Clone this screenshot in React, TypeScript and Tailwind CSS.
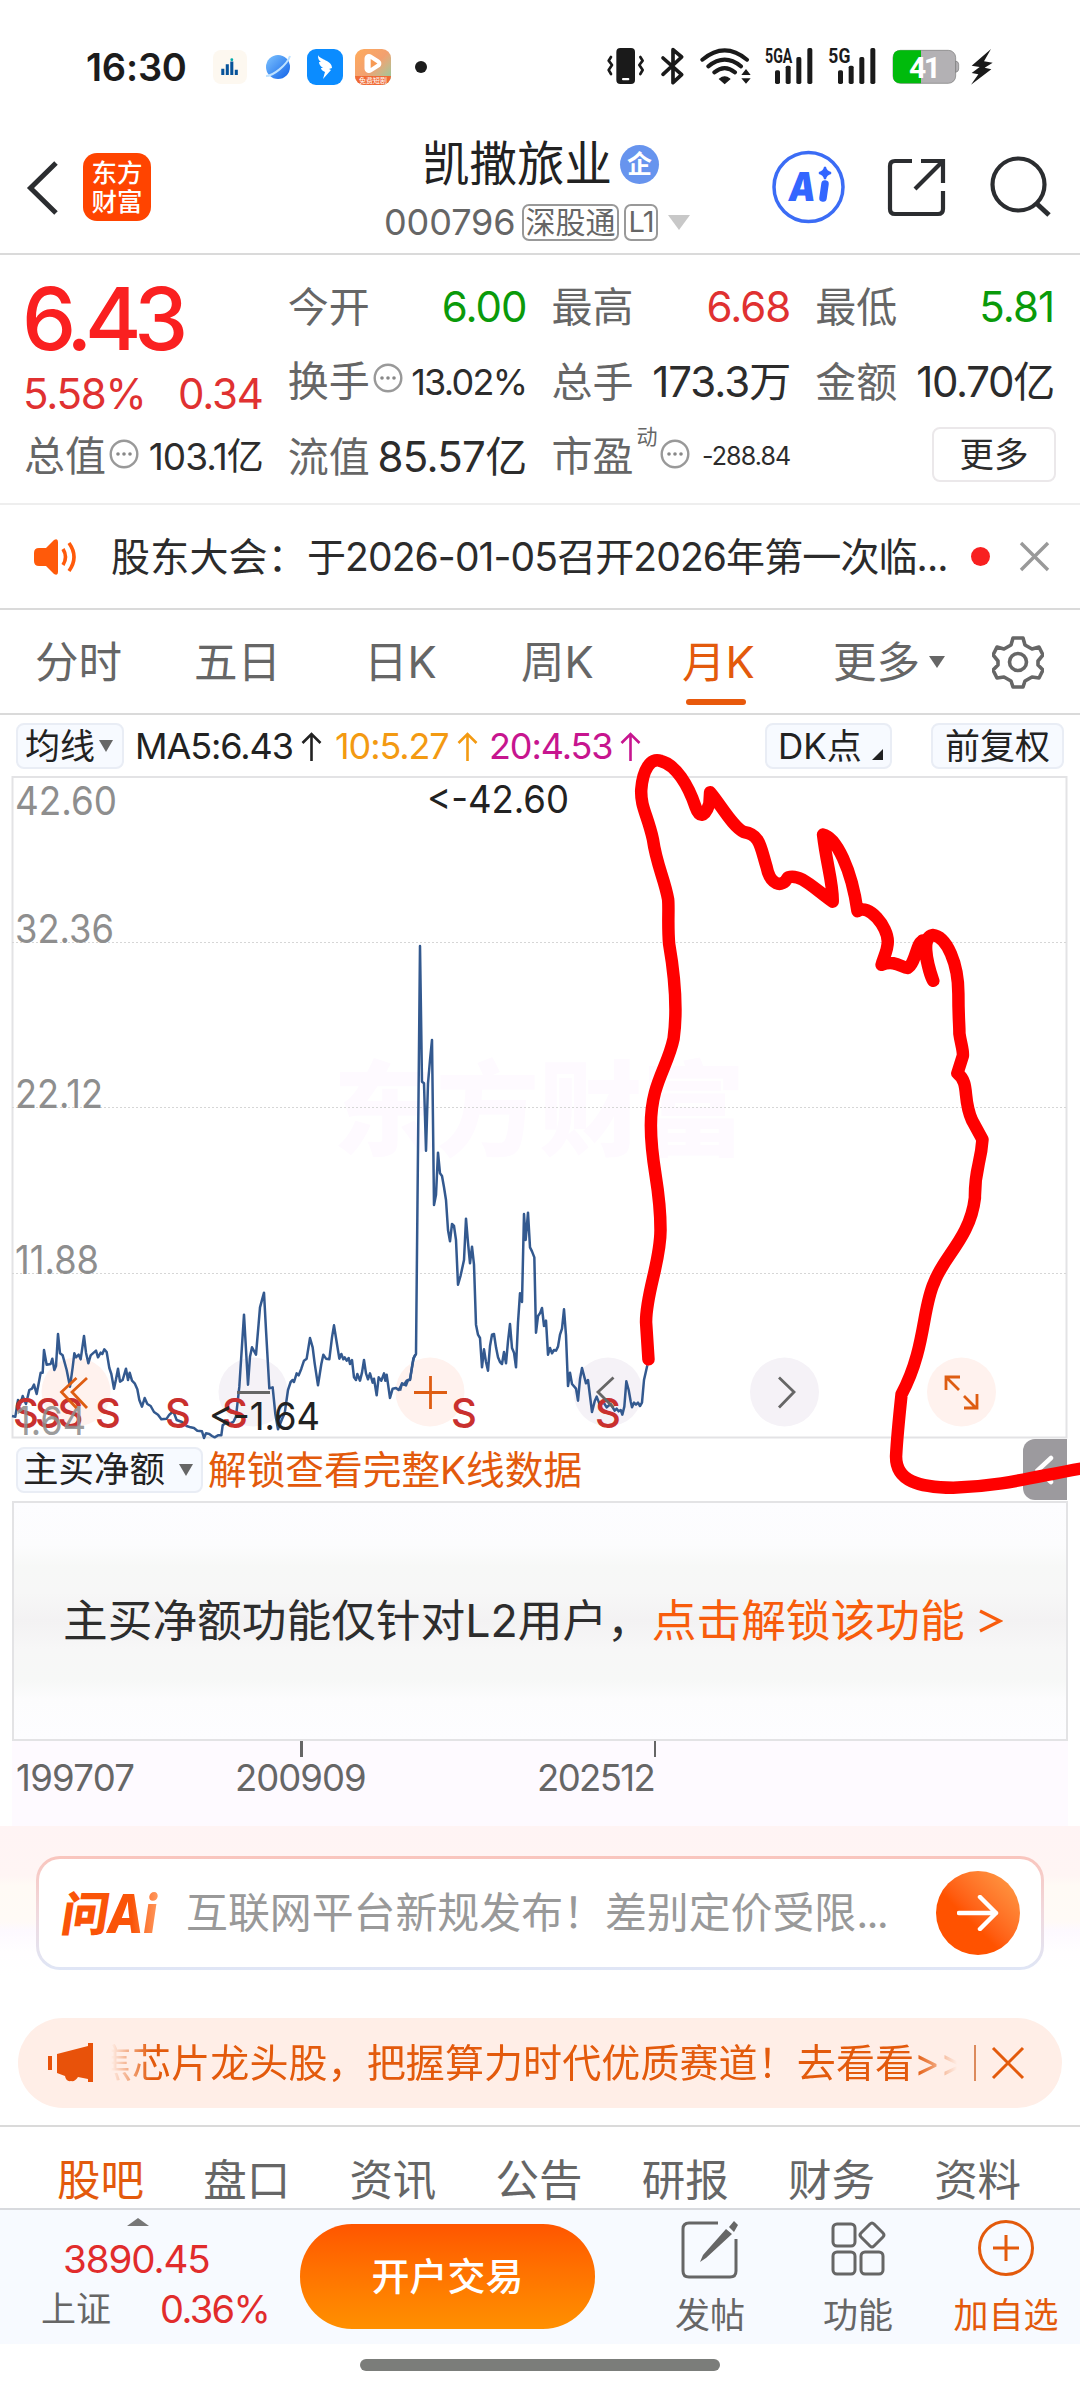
import type { ReactNode } from 'react';

const PRICE_EARLY =
  '36,378 46,380 54,330 60,345 68,318 78,342 88,300 96,296 102,284 110,312 122,248 128,248 132,180 140,224 152,222 157,206 163,240 168,228 174,132 180,190 188,196 200,240 210,290 218,232 223,190 228,202 236,194 242,208 252,138 258,188 265,220 272,196 288,182 294,202 302,188 307,192 313,178 320,186 328,234 334,252 342,296 348,268 354,236 360,275 368,270 378,236 384,270 389,248 396,272 404,280 412,298 418,330 426,350 434,324 442,342 452,348 462,366 474,374 484,388 500,386 508,374 520,364 530,390 546,396 560,408 572,412 582,414 592,422 606,424 612,444 618,430 628,432 636,438 644,442 654,436 664,436 668,406 676,400 686,402 700,396 708,380 718,290 732,74 744,284 750,200 756,172 768,194 776,100 780,52 792,8 798,120 808,295 818,292 826,372 834,418 846,388 854,370 864,300 872,276 878,270 882,276 890,250 896,256 904,236 912,212 920,206 930,144 938,172 944,220 954,286 964,222 970,194 978,206 988,208 996,142 1002,106 1008,144 1018,206 1024,192 1030,208 1034,202 1040,212 1046,204 1050,222 1056,210 1062,262 1068,270 1072,252 1080,272 1086,248 1092,210 1098,250 1104,268 1110,250 1118,278 1122,266 1130,316 1136,262 1144,272 1152,250 1156,272 1160,254 1170,324 1178,296 1188,294 1196,300 1206,282 1212,284 1220,272 1230,268 1240,206 1246,194';
const PRICE_LATE =
  '0,1352 6,1330 18,1336 24,1320 30,1320 38,1270 42,1252 48,1242 60,18 66,425 72,430 78,632 84,430 90,360 96,300 102,795 108,764 114,638 120,700 126,708 132,742 138,780 144,870 150,904 156,852 162,858 168,900 174,1034 182,1006 192,960 198,836 204,908 210,970 216,920 222,974 228,1154 234,1184 240,1194 246,1282 252,1228 258,1266 264,1292 270,1218 276,1184 282,1182 288,1222 294,1252 300,1266 306,1272 312,1236 318,1270 324,1204 330,1152 336,1224 342,1238 348,1282 354,1148 360,1060 366,1086 372,822 377,900 384,818 390,922 396,934 403,952 408,1178 414,1128 420,1120 426,1104 432,1158 438,1142 444,1244 450,1224 456,1240 462,1230 468,1232 474,1220 480,1184 486,1166 492,1108 498,1186 504,1338 510,1298 516,1332 528,1346 534,1382 540,1318 546,1284 558,1330 564,1320 570,1368 576,1416 584,1384 590,1370 600,1396 610,1386 620,1402 632,1392 644,1412 650,1406 656,1414 662,1410 667,1424 673,1400 679,1324 686,1350 692,1384 696,1402 702,1388 708,1394 714,1388 720,1398 726,1388 732,1320 742,1276';

const SCRIBBLE =
  'M315 1245 L308 1170 C308 1110 350 1050 350 985 C350 890 322 860 322 775 C322 690 370 660 388 600 C400 540 390 470 375 410 C370 370 375 340 372 320 C362 280 338 250 328 200 C312 150 292 135 294 100 C298 60 322 34 350 42 C395 50 430 90 452 135 C462 155 478 158 492 128 L494 105 C525 130 560 175 592 185 C640 190 640 215 658 255 C668 290 702 300 720 276 C755 268 790 295 850 325 C852 290 832 250 822 190 C860 195 905 260 922 344 C955 328 1010 375 1010 405 C1010 425 995 440 992 452 C1030 440 1055 460 1068 458 C1090 450 1095 405 1110 405 C1115 390 1120 460 1142 484 C1120 440 1110 396 1140 392 C1182 395 1215 450 1215 510 C1215 560 1218 570 1218 590 C1222 610 1230 625 1228 635 L1212 670 C1250 690 1225 720 1255 765 L1285 803 C1280 855 1262 860 1263 920 C1250 1000 1170 1040 1145 1090 C1110 1140 1120 1225 1050 1315 C1040 1380 1037 1400 1034 1440 C1034 1490 1100 1502 1200 1503 C1350 1500 1450 1478 1600 1461';

function Dots() {
  return (
    <svg className="size-[30px] shrink-0" viewBox="0 0 30 30">
      <circle cx="15" cy="15" r="13.3" fill="none" stroke="#999" strokeWidth="2.4" />
      <circle cx="9" cy="15" r="1.8" fill="#888" />
      <circle cx="15" cy="15" r="1.8" fill="#888" />
      <circle cx="21" cy="15" r="1.8" fill="#888" />
    </svg>
  );
}

function Label({ children }: { children: string }) {
  return <span className="-ml-[2px] text-[41px] text-[#666]">{children}</span>;
}

function Cell({ label, children }: { label: string; children: ReactNode }) {
  return (
    <div className="flex h-[75px] items-center justify-between text-[42px] leading-[48px]">
      <Label>{label}</Label>
      {children}
    </div>
  );
}

function StatusBar() {
  return (
    <div className="flex h-[134px] items-center pl-[86px]">
      <span className="w-[127px] text-[38px] font-semibold tracking-[-0.200px] text-[#1c1c1c]">16:30</span>
      <div className="flex size-[34px] items-center justify-center rounded-[8px] bg-[#fdf8f0]">
        <svg className="h-[18px] w-[18px]" viewBox="0 0 20 20">
          <path d="M2 19V12M7 19V7M12 19V4M17 19v-6" stroke="#07539a" strokeWidth="3.4" />
          <circle cx="12" cy="2" r="1.6" fill="#0aa" />
        </svg>
      </div>
      <svg className="ml-[16px] size-[30px]" viewBox="0 0 30 30">
        <defs>
          <linearGradient id="globe" x1="0" y1="0" x2="1" y2="1">
            <stop offset="0" stopColor="#7fc4ff" />
            <stop offset="1" stopColor="#1062e8" />
          </linearGradient>
        </defs>
        <circle cx="15" cy="15" r="12" fill="url(#globe)" />
        <path d="M3 24C10 24 24 13 27 4" fill="none" stroke="#bfe2ff" strokeWidth="2" />
      </svg>
      <div className="ml-[14px] flex size-[36px] items-center justify-center rounded-[9px] bg-[#0b8cff]">
        <svg className="size-[28px]" viewBox="0 0 28 28">
          <path d="M7 2c2 5 14 5 14 13l-3 1 2 1-8 9 2-7c-3-1-4-3-4-4h2c-3-2-4-4-4-6h2C7 7 7 4 7 2z" fill="#fff" />
        </svg>
      </div>
      <div className="relative ml-[12px] flex size-[36px] items-center justify-center overflow-hidden rounded-[9px] bg-linear-to-br from-[#ffab5a] via-[#f2a070] to-[#6fd0a8]">
        <svg className="mb-[7px] size-[27px]" viewBox="0 0 24 24">
          <path d="M8 7.500l7 4.500-7 4.500z" fill="none" stroke="#fff" strokeWidth="8" strokeLinejoin="round" />
          <path d="M9.500 8l6 4-6 4z" fill="#f79a54" />
        </svg>
        <span className="absolute inset-x-0 bottom-0 h-[9px] bg-[#f06a35] text-center text-[7px] leading-[9px] text-white">免费短剧</span>
      </div>
      <span className="ml-[24px] size-[12px] rounded-full bg-[#1c1c1c]" />
      <svg className="ml-[172px] h-[56px] w-[410px]" viewBox="0 0 1230 168">
        <g fill="#1a1a1a" stroke="none">
          <rect x="52" y="27" width="56" height="108" rx="12" />
          <rect x="69" y="117" width="22" height="7" rx="3" fill="#fff" />
          <path d="M362 120q15-13 30 0l-15 13z" stroke="#1a1a1a" strokeWidth="4" />
          <path d="M441 90l14 18h-28zM441 134l14-16h-28z" />
          <rect x="528" y="94" width="15" height="41" rx="5" />
          <rect x="560" y="80" width="15" height="55" rx="5" />
          <rect x="592" y="54" width="15" height="81" rx="5" />
          <rect x="625" y="27" width="15" height="108" rx="5" />
          <rect x="717" y="94" width="15" height="41" rx="5" />
          <rect x="749" y="80" width="15" height="55" rx="5" />
          <rect x="781" y="54" width="15" height="81" rx="5" />
          <rect x="814" y="27" width="15" height="108" rx="5" />
          <path d="M1176 30L1118 80l24 4-24 18 20 4-22 31 61-46-20-5 24-15-26-4z" />
        </g>
        <g fill="none" stroke="#1a1a1a" strokeWidth="8" strokeLinejoin="round" strokeLinecap="round">
          <path d="M36 54l-7 11 10 13-10 15 7 12M124 54l7 11-10 13 10 15-7 12" />
          <path d="M192 57l56 50-26 24V32l26 22-56 52" strokeWidth="11" />
          <path d="M310 62q67-56 134 0M328 82q49-40 98 0M346 100q31-25 62 0" strokeWidth="12" />
        </g>
        <g fontFamily="Roboto, sans-serif" fontWeight="700" fontSize="62" fill="#1a1a1a">
          <text x="498" y="71" textLength="82" lengthAdjust="spacingAndGlyphs">5GA</text>
          <text x="688" y="71" textLength="66" lengthAdjust="spacingAndGlyphs">5G</text>
        </g>
        <rect x="882" y="34" width="188" height="99" rx="22" fill="#b3b1b4" stroke="#777" strokeWidth="2" />
        <path d="M966 34h-62q-22 0-22 22v55q0 22 22 22h62z" fill="#00bb0c" />
        <path d="M1070 66q9 2 9 10v14q0 8-9 10z" fill="#b3b1b4" stroke="#777" strokeWidth="2" />
        <text x="930" y="116" fontFamily="Roboto, sans-serif" fontWeight="700" fontSize="90" fill="#fff" textLength="96">41</text>
      </svg>
    </div>
  );
}

function Header() {
  return (
    <div className="flex h-[121px] border-b-2 border-[#dadada] pl-[26px]">
      <svg className="mt-[26px] h-[56px] w-[34px]" viewBox="0 0 34 56">
        <path d="M30 3L4.500 28 30 53" fill="none" stroke="#2b2d30" strokeWidth="5" />
      </svg>
      <div className="mt-[19px] ml-[23px] flex size-[68px] flex-col items-center justify-center rounded-[14px] bg-[#ff4400] text-[25.5px] leading-[29px] font-medium text-white">
        <span>东方</span>
        <span>财富</span>
      </div>
      <div className="ml-[233px] w-[310px]">
        <div className="flex h-[60px] items-center pl-[38px]">
          <span className="text-[47.500px] leading-[56px] text-[#222]">凯撒旅业</span>
          <span className="ml-[8px] flex size-[39px] items-center justify-center rounded-full bg-[#6794ee] text-[25px] leading-[30px] font-bold text-white">企</span>
        </div>
        <div className="mt-[9px] flex h-[38px] items-center text-[#666]">
          <span className="w-[138px] text-[36px] leading-[36px] tracking-[-0.100px]">000796</span>
          <span className="flex h-[37px] w-[97px] items-center justify-center rounded-[7px] border-2 border-[#999] text-[30px] leading-[34px]">深股通</span>
          <span className="ml-[5px] flex h-[37px] w-[34px] items-center justify-center rounded-[7px] border-2 border-[#999] text-[29px] leading-[34px] tracking-[-1px]">L1</span>
          <span className="ml-[10px] size-0 border-x-[11px] border-t-[15px] border-x-transparent border-t-[#c8c8c8]" />
        </div>
      </div>
      <svg className="mt-[14px] ml-[68px] h-[80px] w-[290px] shrink-0" viewBox="762 148 290 80">
        <circle cx="808.500" cy="187" r="34.500" fill="none" stroke="#3b6cf5" strokeWidth="3.500" />
        <text x="787" y="201" transform="translate(25 0) skewX(-7)" fontFamily="Inter, sans-serif" fontWeight="900" fontSize="40" fill="#3366ff" textLength="27" lengthAdjust="spacingAndGlyphs">A</text>
        <path d="M825 184l-2 14" stroke="#3366ff" strokeWidth="7.500" strokeLinecap="round" />
        <path d="M825 167q1 5 6 6-5 1-6 6-1-5-6-6 5-1 6-6z" fill="#3366ff" stroke="#3366ff" strokeWidth="2" />
        <g fill="none" stroke="#2b2d30" strokeWidth="4.200">
          <path d="M912 161h-17q-5 0-5 5v43q0 5 5 5h43q5 0 5-5v-18" />
          <path d="M921 161h22v22M943 161l-28 28" />
          <circle cx="1018.500" cy="184.500" r="26" />
          <path d="M1036 203l13 12" strokeWidth="5" />
        </g>
      </svg>
    </div>
  );
}

function Quote() {
  return (
    <div className="grid h-[250px] grid-cols-4 gap-[27px] border-b-2 border-[#eee] px-[26px] pt-[14px] text-[#2c2c2c]">
      <div>
        <div className="-ml-[4px] flex h-[100px] items-center text-[86px] leading-[90px] font-medium tracking-[-7.200px] text-[#fa2020]">6.43</div>
        <div className="-ml-[3px] flex h-[50px] items-center justify-between text-[42px] leading-[50px] tracking-[-1.200px] text-[#e03131]">
          <span>5.58%</span>
          <span>0.34</span>
        </div>
        <div className="flex h-[75px] items-center">
          <Label>总值</Label>
          <span className="mb-[6px] ml-[3px] flex"><Dots /></span>
          <span className="ml-auto text-[37px] tracking-[-1px]">103.1亿</span>
        </div>
      </div>
      <div>
        <Cell label="今开"><span className="tracking-[-1px] text-[#0a9a0a]">6.00</span></Cell>
        <div className="flex h-[75px] items-center">
          <Label>换手</Label>
          <span className="mb-[8px] ml-[3px] flex"><Dots /></span>
          <span className="ml-auto text-[36px] tracking-[-1.700px]">13.02%</span>
        </div>
        <Cell label="流值"><span className="tracking-[-0.700px]">85.57亿</span></Cell>
      </div>
      <div>
        <Cell label="最高"><span className="tracking-[-1px] text-[#e03131]">6.68</span></Cell>
        <Cell label="总手"><span className="tracking-[-1px]">173.3万</span></Cell>
        <div className="flex h-[75px] items-center">
          <Label>市盈</Label>
          <span className="mb-[40px] ml-[3px] text-[21px] leading-[24px] text-[#666]">动</span>
          <span className="mb-[6px] ml-[2px] flex"><Dots /></span>
          <span className="ml-auto text-[25px] tracking-[-0.900px]">-288.84</span>
        </div>
      </div>
      <div>
        <Cell label="最低"><span className="tracking-[-1px] text-[#0a9a0a]">5.81</span></Cell>
        <Cell label="金额"><span className="tracking-[-1.300px]">10.70亿</span></Cell>
        <div className="mt-[8px] -mr-[2px] ml-auto flex h-[55px] w-[124px] items-center justify-center rounded-[8px] border-2 border-[#ebe8ea] text-[34.500px] leading-[40px]">更多</div>
      </div>
    </div>
  );
}

function Notice() {
  return (
    <div className="flex h-[105px] items-center border-b-2 border-[#dadada] pl-[33px]">
      <svg className="h-[38px] w-[46px]" viewBox="0 0 46 38">
        <path d="M6 10h7L21 2q4-2 4 2v30q0 4-4 2l-8-8H6q-5 0-5-5v-8q0-5 5-5z" fill="#ff5a0a" />
        <path d="M30 11q5 8 0 16M36 5q10 14 0 28" fill="none" stroke="#ff5a0a" strokeWidth="3.600" />
      </svg>
      <span className="ml-[32px] w-[860px] text-[39px] leading-[48px] tracking-[-0.900px] whitespace-nowrap text-[#2b2b2b]">
        <span className="tracking-[0.200px]">股东大会：</span>于2026-01-05召开2026年第一次临...
      </span>
      <span className="size-[19px] rounded-full bg-[#f82020]" />
      <svg className="ml-[29px] size-[31px]" viewBox="0 0 31 31">
        <path d="M2 2l27 27M29 2L2 29" stroke="#999" strokeWidth="3.400" />
      </svg>
    </div>
  );
}

const PERIODS = [
  { label: '分时', pad: 'ml-[35px] w-[88px]' },
  { label: '五日', pad: 'ml-[71px] w-[88px]' },
  { label: '日K', pad: 'ml-[82px] w-[76px]' },
  { label: '周K', pad: 'ml-[81px] w-[76px]' },
  { label: '月K', pad: 'ml-[85px] w-[72px]', active: true },
  { label: '更多', pad: 'ml-[79px] w-[88px]' },
];

function Periods() {
  return (
    <div className="flex h-[105px] items-center border-b-2 border-[#dadada] text-[43.500px] leading-[52px] text-[#666]">
      {PERIODS.map((p) => (
        <span key={p.label} className={`relative shrink-0 whitespace-nowrap ${p.pad} ${p.active ? 'text-[#e35a0c]' : ''}`}>
          {p.label}
          {p.active && <span className="absolute -bottom-[17px] left-[4px] h-[6px] w-[60px] rounded-full bg-[#e8590c]" />}
        </span>
      ))}
      <span className="ml-[8px] size-0 border-x-[8px] border-t-[12px] border-x-transparent border-t-[#666]" />
      <svg className="ml-[47px] h-[54px] w-[52px]" viewBox="0 0 52 54">
        <path
          d="M21 3h10l2 7 7 4 7-2 4 8-5 6v4l5 5-4 8-7-1-7 4-2 6H21l-2-6-7-4-7 1-4-8 5-5v-4l-5-6 4-8 7 2 7-4z"
          fill="none" stroke="#666" strokeWidth="3.600" strokeLinejoin="round"
        />
        <circle cx="26" cy="27" r="8.500" fill="none" stroke="#666" strokeWidth="3.600" />
      </svg>
    </div>
  );
}

function Averages() {
  return (
    <div className="flex h-[61px] items-center pl-[16px] text-[36px] leading-[44px] whitespace-nowrap text-[#222]">
      <span className="flex h-[46px] w-[108px] items-center rounded-[8px] border-2 border-[#e9edf5] bg-[#f7faff] pl-[7px]">
        <span className="text-[35px]">均线</span>
        <span className="ml-[4px] size-0 border-x-[7.500px] border-t-[12px] border-x-transparent border-t-[#666]" />
      </span>
      <span className="ml-[11px] w-[200px] tracking-[-1.100px]">MA5:6.43<Up /></span>
      <span className="w-[154px] tracking-[-1.100px] text-[#f39a12]">10:5.27<Up /></span>
      <span className="w-[276px] tracking-[-1.100px] text-[#c7158f]">20:4.53<Up /></span>
      <span className="flex h-[46px] w-[127px] items-center rounded-[8px] border-2 border-[#e9edf5] bg-[#f7faff] pl-[11px] text-[35px]">
        DK点
        <span className="mt-[18px] ml-[10px] size-0 border-b-[11px] border-l-[11px] border-b-[#222] border-l-transparent" />
      </span>
      <span className="ml-[39px] flex h-[46px] w-[133px] items-center justify-center rounded-[8px] border-2 border-[#e9edf5] bg-[#f7faff] text-[35px]">前复权</span>
    </div>
  );
}

function Up() {
  return (
    <svg className="ml-[8px] inline-block h-[30px] w-[21px] align-[-3px]" viewBox="0 0 21 30">
      <path d="M10.500 29V2M1.500 11l9-9 9 9" fill="none" stroke="currentColor" strokeWidth="2.600" />
    </svg>
  );
}

const AXIS = [
  { y: 815, v: '42.60', w: 102 },
  { y: 943, v: '32.36', w: 99 },
  { y: 1108, v: '22.12', w: 88 },
  { y: 1274, v: '11.88', w: 84 },
];
const MARKS = [26, 48, 70.5, 108, 178, 235, 464, 608];

function Chart() {
  return (
    <div className="relative h-[662px]">
      <svg className="block h-[662px] w-[1080px] overflow-visible" viewBox="0 776 1080 662">
        <g fontFamily="'Noto Sans CJK SC', sans-serif" fontWeight="900" fontSize="103" fill="#fefaff">
          <text x="333" y="1148" textLength="412">东方财富</text>
        </g>
        <path d="M12.500 777H1066.500V1437.500H12.500z" fill="none" stroke="#e3e3e5" strokeWidth="2" />
        <path d="M12 942.500H1067M12 1107.500H1067M12 1273.500H1067" stroke="#d6d6d6" strokeDasharray="2 2" />
        <g fontFamily="Inter, sans-serif" fontSize="39" fill="#8e8e8e">
          {AXIS.map((a) => (
            <text key={a.v} x="15" y={a.y} textLength={a.w} lengthAdjust="spacingAndGlyphs">{a.v}</text>
          ))}
        </g>
        <g>
          <circle cx="76" cy="1392" r="34.500" fill="#fff2ee" />
          <circle cx="253" cy="1392" r="34.500" fill="#f5f2f7" />
          <circle cx="430" cy="1392" r="34.500" fill="#fff2ee" />
          <circle cx="608" cy="1392" r="34.500" fill="#f5f2f7" />
          <circle cx="784.500" cy="1392" r="34.500" fill="#f5f2f7" />
          <circle cx="961.500" cy="1392" r="34.500" fill="#fff2ee" />
        </g>
        <g fill="none" stroke="#33598f" strokeWidth="7.500" strokeLinejoin="round">
          <polyline points={PRICE_EARLY} transform="translate(0 1290) scale(.33333)" />
          <polyline points={PRICE_LATE} transform="translate(400 940) scale(.33333)" />
        </g>
        <g fontFamily="Inter, sans-serif" fontSize="40" fontWeight="500" fill="#c9302e" textAnchor="middle">
          {MARKS.map((x) => (
            <text key={x} x={x} y="1427">S</text>
          ))}
        </g>
        <text x="16" y="1435" fontFamily="Inter, sans-serif" fontSize="39" fill="#8e8e8e" fillOpacity="0.9" textLength="70" lengthAdjust="spacingAndGlyphs">1.64</text>
        <g fontFamily="Inter, sans-serif" fontSize="38.500" fill="#222">
          <text x="427" y="813" textLength="142" lengthAdjust="spacingAndGlyphs">&lt;-42.60</text>
          <text x="209" y="1429.500" textLength="111" lengthAdjust="spacingAndGlyphs">&lt;-1.64</text>
        </g>
        <g fill="none" stroke="#de5d12" strokeWidth="2.800">
          <path d="M76.500 1378l-15 14 15 16M87 1378l-15 14 15 16" />
          <path d="M414 1392.500h33M430.500 1376v33" />
          <path d="M946 1390v-13h14M947 1378l12 12M964 1396l12 12M964 1408h13v-14" />
        </g>
        <g fill="none" stroke="#666" strokeWidth="2.800">
          <path d="M237 1392.500h33" />
          <path d="M613.500 1377.500L598 1392l15.500 15.500" />
          <path d="M779 1377.500l15 14.500-15 15.500" />
        </g>
      </svg>
      <svg className="absolute top-0 left-0 z-10 h-[740px] w-[1080px]" viewBox="0 776 1080 740" overflow="visible">
        <path
          d={SCRIBBLE} transform="translate(540 740) scale(.34435 .49750)"
          vectorEffect="non-scaling-stroke" fill="none" stroke="#ff0000" strokeWidth="12.500"
          strokeLinecap="round" strokeLinejoin="round"
        />
      </svg>
    </div>
  );
}

function Unlock() {
  return (
    <>
      <div className="flex h-[63px] items-center pl-[16px] whitespace-nowrap">
        <span className="flex h-[46px] w-[187px] items-center rounded-[8px] border-2 border-[#e9edf5] bg-[#f7faff] pl-[5px] text-[35.500px] leading-[42px] text-[#222]">
          主买净额
          <span className="ml-[14px] size-0 border-x-[7.500px] border-t-[12px] border-x-transparent border-t-[#666]" />
        </span>
        <span className="ml-[5px] text-[38.700px] leading-[46px] text-[#e35a0c]">解锁查看完整K线数据</span>
        <span className="ml-auto mr-[13px] flex h-[61px] w-[44px] items-center justify-center rounded-l-[12px] bg-[#9c9a9e]">
          <svg className="h-[30px] w-[20px]" viewBox="0 0 20 30">
            <path d="M16 3L3 15l13 12" fill="none" stroke="#fff" strokeWidth="4.500" strokeLinecap="round" />
          </svg>
        </span>
      </div>
      <div className="mr-[12px] ml-[12px] flex h-[240px] items-center border-2 border-[#e3e3e5] bg-[linear-gradient(180deg,#fdfdff_0%,#fcfcfd_18%,#f7f8f7_27%,#f7f7f7_38%,#f3f2f3_50%,#f7f7f7_62%,#f7f8f7_75%,#fcfcfd_83%,#fdfdff_100%)] pl-[49px] text-[44.700px] leading-[54px] whitespace-nowrap text-[#2d2d2d]">
        主买净额功能仅针对L2用户，
        <span className="text-[#f85c0c]">点击解锁该功能</span>
        <svg className="ml-[14px] h-[24px] w-[24px]" viewBox="0 0 24 24">
          <path d="M1 2l20 10L1 22" fill="none" stroke="#f85c0c" strokeWidth="3.200" />
        </svg>
      </div>
      <div className="mr-[12px] ml-[12px] h-[85px] bg-[#fefaff] text-[36.500px] leading-[40px] text-[#666]">
        <div className="flex h-[16px]">
          <span className="ml-[288px] w-[2.500px] bg-[#666]" />
          <span className="ml-[351px] w-[2.500px] bg-[#666]" />
        </div>
        <div className="flex pt-[1px]">
          <span className="ml-[4px] w-[219px] tracking-[-0.700px]">199707</span>
          <span className="w-[302px] tracking-[-1px]">200909</span>
          <span className="tracking-[-1.600px]">202512</span>
        </div>
      </div>
    </>
  );
}

function AskAi() {
  return (
    <div className="h-[192px] bg-[linear-gradient(180deg,#fff4f4_0,#fff5f4_50px,#fffaf5_60px,#fffaf6_95px,#fdf9ff_105px,#fffeff_125px,#fff_150px)] px-[36px] pt-[30px]">
      <div className="h-[114px] rounded-[24px] bg-[linear-gradient(180deg,#f9c5bd,#f0d9de_50%,#dfe6f6)] p-[3px]">
        <div className="flex h-full items-center rounded-[21px] bg-white">
          <svg className="ml-[19px] h-[48px] w-[104px] overflow-visible" viewBox="0 0 104 48">
            <defs>
              <linearGradient id="ask" x1="0" x2="1">
                <stop offset="0.5" stopColor="#fa5408" />
                <stop offset="1" stopColor="#ff9a60" />
              </linearGradient>
            </defs>
            <text x="8" y="41.500" transform="skewX(-9)" fontFamily="'Noto Sans CJK SC', sans-serif" fontWeight="900" fontSize="47" fill="#fa5408">问</text>
            <text x="49" y="43.500" fontFamily="Inter, sans-serif" fontWeight="800" fontStyle="italic" fontSize="54" fill="url(#ask)" textLength="50" lengthAdjust="spacingAndGlyphs">Ai</text>
          </svg>
          <span className="ml-[24px] w-[750px] text-[41.900px] leading-[50px] whitespace-nowrap text-[#999]">
            互联网平台新规发布！差别定价受限<span className="tracking-[-1.800px]">...</span>
          </span>
          <span className="flex size-[84px] items-center justify-center rounded-full bg-linear-to-bl from-[#ff9440] from-10% to-[#ff5200] to-60%">
            <svg className="h-[36px] w-[42px]" viewBox="0 0 42 36">
              <path d="M2 18h37M23 2l16 16-16 16" fill="none" stroke="#fff" strokeWidth="4.500" strokeLinecap="round" strokeLinejoin="round" />
            </svg>
          </span>
        </div>
      </div>
    </div>
  );
}

function Promo() {
  return (
    <div className="h-[107px] px-[18px]">
      <div className="flex h-[90px] items-center rounded-[45px] bg-[#ffeee7] pl-[29px] text-[#e35a0c]">
        <svg className="h-[42px] w-[48px]" viewBox="0 0 48 42">
          <path d="M3 14v14" stroke="#e8520a" strokeWidth="4" />
          <path d="M10 12L41 4V1h5v39h-5v-3l-10-2q-3 5-7 4-5 1-6-5l-8-3z" fill="#e8520a" />
        </svg>
        <span className="ml-[16px] w-[846px] overflow-hidden text-[39px] leading-[48px] whitespace-nowrap [mask-image:linear-gradient(90deg,transparent,#000_40px,#000_805px,transparent_846px)]">
          <span className="-ml-[18px] tracking-[0.100px]">焦芯片龙头股，把握算力时代优质赛道！去看看&gt;&gt;</span>
        </span>
        <span className="ml-[17px] h-[36px] w-[2px] bg-[#dc8a5c]" />
        <svg className="ml-[15px] size-[34px]" viewBox="0 0 34 34">
          <path d="M2 2l30 30M32 2L2 32" stroke="#e35a0c" strokeWidth="3" />
        </svg>
      </div>
    </div>
  );
}

const SECTIONS = ['股吧', '盘口', '资讯', '公告', '研报', '财务', '资料'];

function Bottom() {
  return (
    <>
      <div className="flex h-[83px] items-start gap-[59px] border-t-2 border-[#dadada] pt-[27px] pl-[57px] text-[43.500px] leading-[52px] whitespace-nowrap text-[#666]">
        {SECTIONS.map((s, i) => (
          <span key={s} className={`w-[87.200px] shrink-0 ${i === 0 ? 'text-[#e35a0c]' : ''}`}>{s}</span>
        ))}
      </div>
      <div className="flex h-[136px] border-t-2 border-[#d8dade] bg-[#f7faff] whitespace-nowrap">
        <div className="w-[300px] text-[#e12c2c]">
          <span className="mt-[8px] ml-[127px] block size-0 border-x-[11px] border-b-[8px] border-x-transparent border-b-[#777]" />
          <span className="mt-[11px] ml-[63px] block text-[38.500px] leading-[44px] tracking-[-1.100px]">3890.45</span>
          <span className="mt-[4px] ml-[41px] flex h-[48px] items-center text-[36px]">
            <span className="w-[119px] text-[35px] text-[#666]">上证</span>
            <span className="text-[38px] tracking-[-1.600px]">0.36%</span>
          </span>
        </div>
        <div className="mt-[14px] flex h-[105px] w-[295px] items-center justify-center rounded-[52px] bg-linear-to-b from-[#ff5500] to-[#ff9000] text-[38px] font-medium text-white">开户交易</div>
        <div className="ml-[64px] flex w-[102px] flex-col items-center text-[35px] leading-[42px] text-[#666]">
          <svg className="mt-[9px] size-[60px]" viewBox="0 0 60 60">
            <path d="M38 4H9q-6 0-6 6v42q0 6 6 6h41q6 0 6-6V20" fill="none" stroke="#666" strokeWidth="3" />
            <path d="M49 8l5-6 4 4-4 7zM46 10l6 5-26 24-6 4 3-7z" fill="#666" />
          </svg>
          <span className="mt-[15px]">发帖</span>
        </div>
        <div className="ml-[46px] flex w-[102px] flex-col items-center text-[35px] leading-[42px] text-[#666]">
          <svg className="mt-[9px] size-[60px]" viewBox="0 0 60 60">
            <g fill="none" stroke="#666" strokeWidth="3">
              <rect x="5" y="5" width="22" height="22" rx="4" />
              <rect x="5" y="33" width="22" height="22" rx="4" />
              <rect x="33" y="33" width="22" height="22" rx="4" />
              <path d="M42 5q2-2 4 0l9 9q2 2 0 4l-9 9q-2 2-4 0l-9-9q-2-2 0-4z" />
            </g>
          </svg>
          <span className="mt-[15px]">功能</span>
        </div>
        <div className="ml-[37px] flex w-[120px] flex-col items-center text-[35px] leading-[42px] text-[#e35a0c]">
          <svg className="mt-[8px] size-[60px]" viewBox="0 0 60 60">
            <circle cx="30" cy="30" r="26.500" fill="none" stroke="#e35a0c" strokeWidth="3" />
            <path d="M17 30h26M30 17v26" stroke="#e35a0c" strokeWidth="3" />
          </svg>
          <span className="mt-[16px]">加自选</span>
        </div>
      </div>
      <div className="flex h-[48px] justify-center bg-white pt-[15px]">
        <span className="h-[12px] w-[360px] rounded-full bg-[#7b7d7a]" />
      </div>
    </>
  );
}

export default function App() {
  return (
    <main className="h-[2392px] w-[1080px] overflow-hidden bg-white font-['Inter','Noto_Sans_CJK_SC',sans-serif]">
      <StatusBar />
      <Header />
      <Quote />
      <Notice />
      <Periods />
      <Averages />
      <Chart />
      <Unlock />
      <AskAi />
      <Promo />
      <Bottom />
    </main>
  );
}
